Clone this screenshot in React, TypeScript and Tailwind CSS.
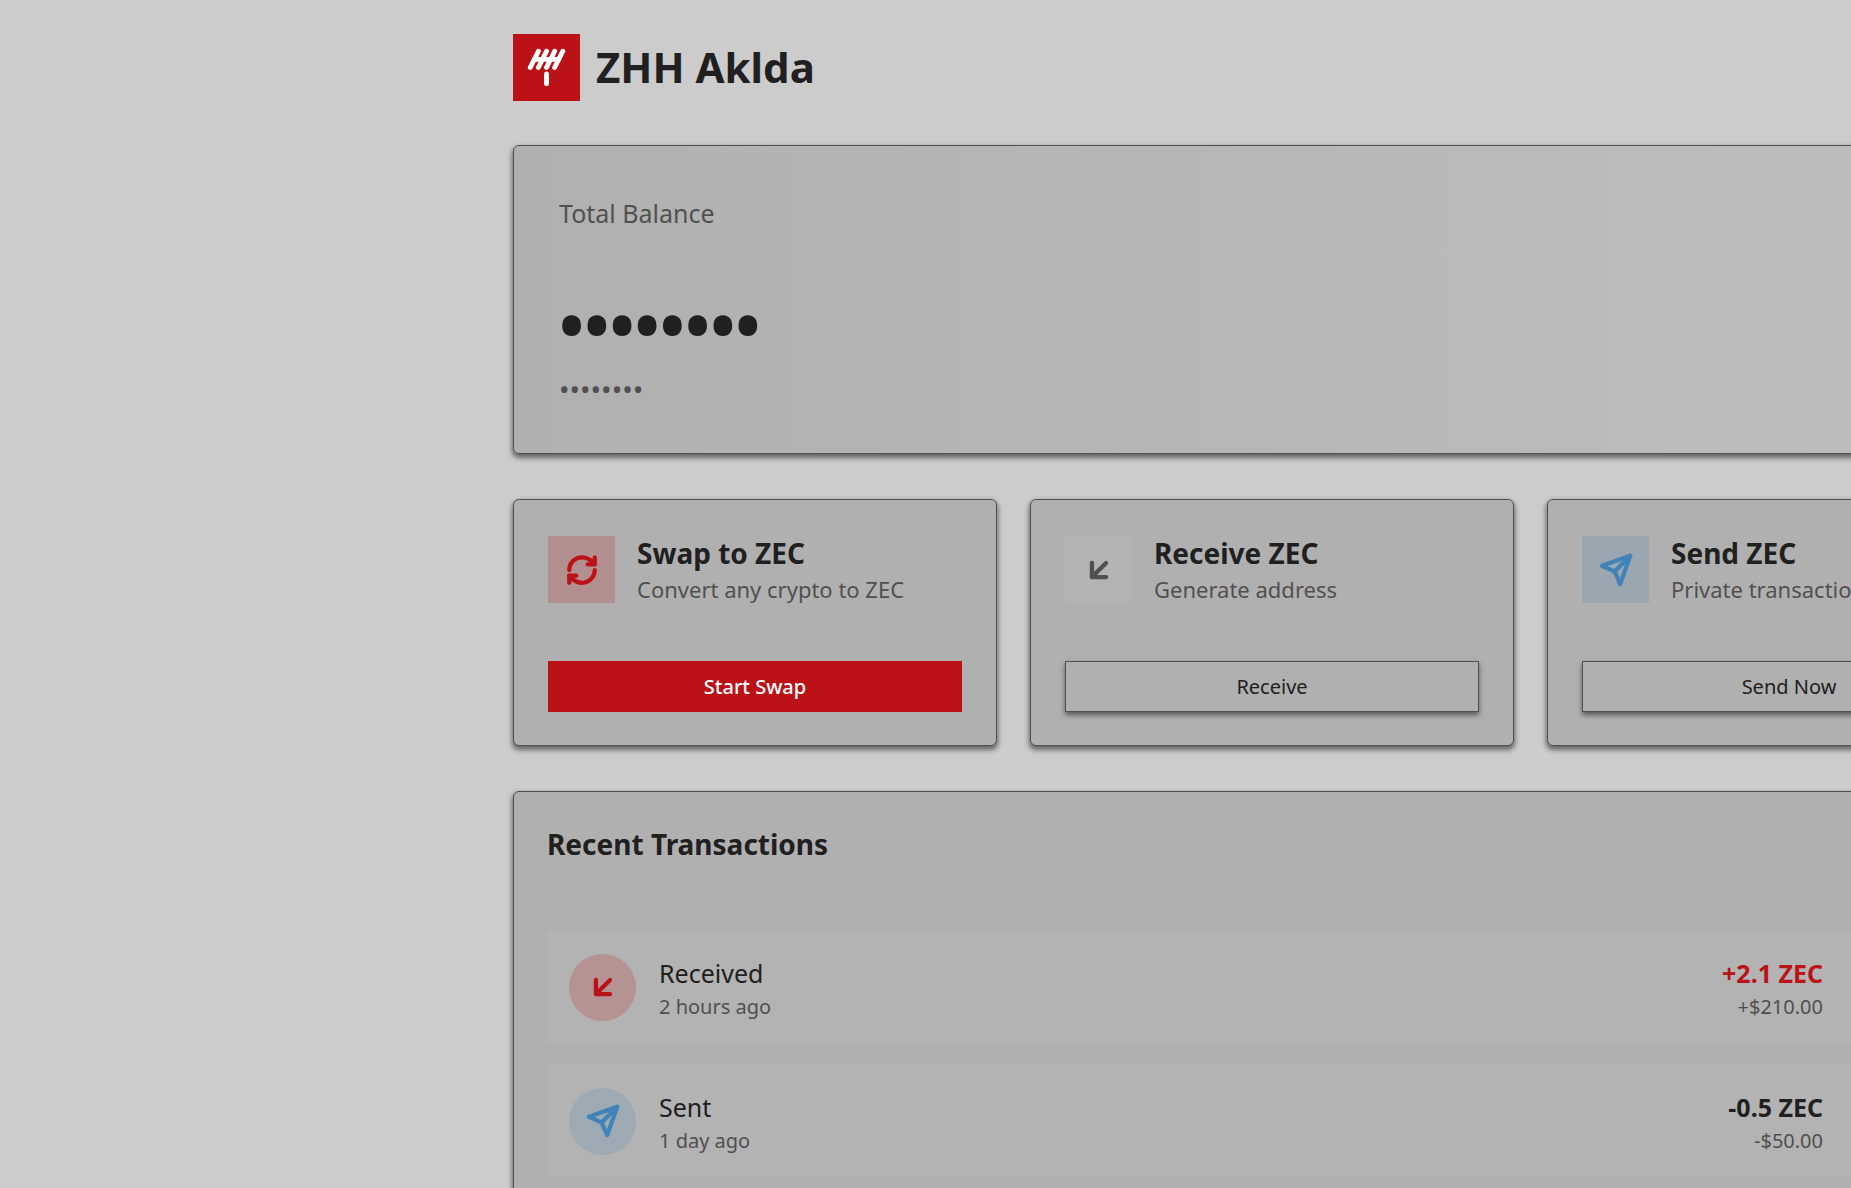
import type { ReactNode } from "react";
import { Antenna, ArrowDownLeft, RefreshCw } from "lucide-react";

function SendIcon({ className }: { className: string }) {
  return (
    <svg
      viewBox="0 0 24 24"
      fill="none"
      stroke="currentColor"
      strokeWidth={3}
      strokeLinecap="round"
      strokeLinejoin="round"
      className={className}
      aria-hidden="true"
    >
      <path d="m22 2-7 20-4-9-9-4Z" />
      <path d="M22 2 11 13" />
    </svg>
  );
}

const panel =
  "rounded-md border border-[#505050] shadow-[0_3px_5px_1px_rgba(0,0,0,0.5)]";

const outlineButton =
  "border border-[#505050] font-normal text-[#202020] shadow-[0_3px_5px_0_rgba(0,0,0,0.5)]";

type ActionProps = {
  icon: ReactNode;
  tint: string;
  title: string;
  note: string;
  label: string;
  buttonStyle: string;
};

function ActionCard({ icon, tint, title, note, label, buttonStyle }: ActionProps) {
  return (
    <article className={`${panel} bg-[#b0b0b0] px-[34px] py-[33px]`}>
      <div className="flex items-center gap-[22px]">
        <div className={`flex size-[67px] shrink-0 items-center justify-center ${tint}`}>{icon}</div>
        <div>
          <h3 className="text-[28px] leading-10 font-bold text-[#202020]">{title}</h3>
          <p className="text-[22px] leading-[33px] text-[#505050]">{note}</p>
        </div>
      </div>
      <button type="button" className={`mt-[55px] h-[51px] w-full text-[20px] ${buttonStyle}`}>
        {label}
      </button>
    </article>
  );
}

type TransactionProps = {
  icon: ReactNode;
  tint: string;
  title: string;
  time: string;
  amount: string;
  amountColor: string;
  value: string;
};

function Transaction({ icon, tint, title, time, amount, amountColor, value }: TransactionProps) {
  return (
    <li className="flex items-center gap-[23px] bg-[#b3b3b3] py-[22px] pr-[174px] pl-[22px]">
      <div className={`flex size-[67px] shrink-0 items-center justify-center rounded-full ${tint}`}>{icon}</div>
      <div className="flex-1">
        <p className="text-[25px] leading-10 text-[#202020]">{title}</p>
        <p className="text-[20px] leading-7 text-[#505050]">{time}</p>
      </div>
      <div className="text-right">
        <p className={`text-[25px] leading-10 font-bold ${amountColor}`}>{amount}</p>
        <p className="text-[20px] leading-7 text-[#505050]">{value}</p>
      </div>
    </li>
  );
}

export default function App() {
  return (
    <div className="h-screen overflow-hidden bg-[#cccccc] font-['Noto_Sans',sans-serif]">
      <main className="ml-[513px] flex min-w-[1518px] flex-col gap-[45px] pt-[34px]">
        <header className="flex h-[66px] items-start gap-4">
          <div className="flex size-[67px] items-center justify-center bg-[#bb1218] text-white">
            <Antenna className="size-[39px]" strokeWidth={3} aria-hidden="true" />
          </div>
          <h1 className="text-[42px] leading-[66px] font-bold text-[#202020]">ZHH Aklda</h1>
        </header>

        <section className={`${panel} bg-linear-to-r from-[#b0b0b0] to-[#bebebe] px-[45px] py-11`}>
          <h2 className="text-[25px] leading-[47px] text-[#505050]">Total Balance</h2>
          <p className="mt-[54px] text-[67px] leading-[67px] font-bold text-[#202020]">••••••••</p>
          <p className="mt-[11px] text-[28px] leading-10 text-[#505050]">••••••••</p>
        </section>

        <section className="grid grid-cols-3 gap-[33px]">
          <ActionCard
            icon={<RefreshCw className="size-[34px]" strokeWidth={3} aria-hidden="true" />}
            tint="bg-[#b29090] text-[#bb1218]"
            title="Swap to ZEC"
            note="Convert any crypto to ZEC"
            label="Start Swap"
            buttonStyle="bg-[#bb1218] font-medium text-white"
          />
          <ActionCard
            icon={<ArrowDownLeft className="size-[34px]" strokeWidth={3} aria-hidden="true" />}
            tint="bg-[#b3b3b3] text-[#505050]"
            title="Receive ZEC"
            note="Generate address"
            label="Receive"
            buttonStyle={outlineButton}
          />
          <ActionCard
            icon={<SendIcon className="size-[34px]" />}
            tint="bg-[#9aa7b0] text-[#4183b8]"
            title="Send ZEC"
            note="Private transaction"
            label="Send Now"
            buttonStyle={outlineButton}
          />
        </section>

        <section className={`${panel} bg-[#b0b0b0] p-[33px]`}>
          <h2 className="text-[28px] leading-[39px] font-bold text-[#202020]">Recent Transactions</h2>
          <ul className="mt-[67px] flex flex-col gap-[22px]">
            <Transaction
              icon={<ArrowDownLeft className="size-[34px]" strokeWidth={3} aria-hidden="true" />}
              tint="bg-[#b59393] text-[#bb1218]"
              title="Received"
              time="2 hours ago"
              amount="+2.1 ZEC"
              amountColor="text-[#bb1218]"
              value="+$210.00"
            />
            <Transaction
              icon={<SendIcon className="size-[34px]" />}
              tint="bg-[#9daab3] text-[#4183b8]"
              title="Sent"
              time="1 day ago"
              amount="-0.5 ZEC"
              amountColor="text-[#202020]"
              value="-$50.00"
            />
          </ul>
        </section>
      </main>
    </div>
  );
}
